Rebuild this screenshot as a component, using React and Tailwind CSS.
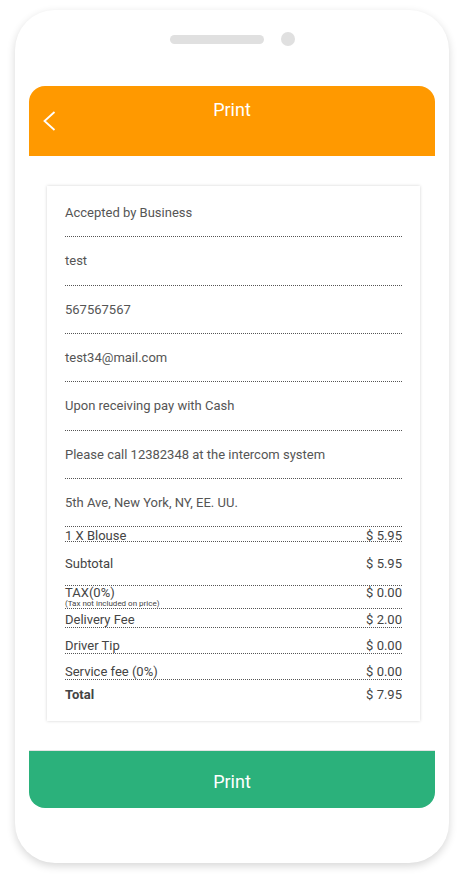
const INFO = [
  'Accepted by Business',
  'test',
  '567567567',
  'test34@mail.com',
  'Upon receiving pay with Cash',
  'Please call 12382348 at the intercom system',
  '5th Ave, New York, NY, EE. UU.',
]

export default function App() {
  return (
    <div className="w-[464px] h-[884px] bg-white pt-[10px] px-[15px] font-['Roboto',sans-serif]">
      <div className="h-[853px] bg-white rounded-[40px] shadow-[0_3px_9px_rgba(0,0,0,0.16)] flex flex-col">
        {/* speaker + camera */}
        <div className="mt-[22px] h-[14px] flex items-center justify-center gap-[17px]">
          <div className="w-[94px] h-[9px] rounded-full bg-[#e0e0e0]" />
          <div className="w-[14px] h-[14px] rounded-full bg-[#e0e0e0]" />
        </div>

        {/* header */}
        <div className="mt-[40px] mx-[14px] h-[70px] bg-[#ff9900] rounded-t-[16px] flex px-[14px]">
          <svg className="mt-[25px] w-[13px] h-[20px]" viewBox="0 0 13 20" fill="none">
            <polyline points="11.5,1 1.5,10 11.5,19" stroke="#fff" strokeWidth="1.8" />
          </svg>
          <div className="flex-1 text-center pt-[12px] leading-[24px] text-[18px] text-white">Print</div>
          <div className="w-[13px]" />
        </div>

        {/* receipt */}
        <div className="mt-[30px] ml-[32px] w-[373px] bg-white shadow-[0_0_3px_rgba(0,0,0,0.18)] pt-[3px] px-[18px] pb-[19px] text-[13px] text-[#555]">
          {INFO.map(t => (
            <div key={t} className="pt-[14px] pb-[14px] leading-[19.33px] border-b border-dotted border-[#555]">{t}</div>
          ))}

          <div className="flex justify-between pt-[3px] leading-[11px] border-b border-dotted border-[#555] text-[#444]">
            <span>1 X Blouse</span><span>$ 5.95</span>
          </div>
          <div className="flex justify-between pt-[15px] pb-[14px] leading-[14px] border-b border-dotted border-[#555] text-[#444]">
            <span>Subtotal</span><span>$ 5.95</span>
          </div>
          <div className="border-b border-dotted border-[#555] text-[#444]">
            <div className="flex justify-between leading-[13px]">
              <span>TAX(0%)</span><span>$ 0.00</span>
            </div>
            <div className="text-[8px] leading-[9px]">(Tax not included on price)</div>
          </div>
          <div className="flex justify-between pt-[4px] leading-[14px] border-b border-dotted border-[#555] text-[#444]">
            <span>Delivery Fee</span><span>$ 2.00</span>
          </div>
          <div className="flex justify-between pt-[11px] leading-[14px] border-b border-dotted border-[#555] text-[#444]">
            <span>Driver Tip</span><span>$ 0.00</span>
          </div>
          <div className="flex justify-between pt-[11px] leading-[14px] border-b border-dotted border-[#555] text-[#444]">
            <span>Service fee (0%)</span><span>$ 0.00</span>
          </div>
          <div className="flex justify-between pt-[8px] leading-[14px] text-[#444]">
            <span className="font-bold">Total</span><span>$ 7.95</span>
          </div>
        </div>

        {/* print button */}
        <div className="mt-[29px] mx-[14px] h-[58px] pt-[4px] bg-[#2bb17b] rounded-b-[16px] border-t border-[#e3e3e3] flex items-center justify-center text-[18px] text-white">
          Print
        </div>
      </div>
    </div>
  )
}
